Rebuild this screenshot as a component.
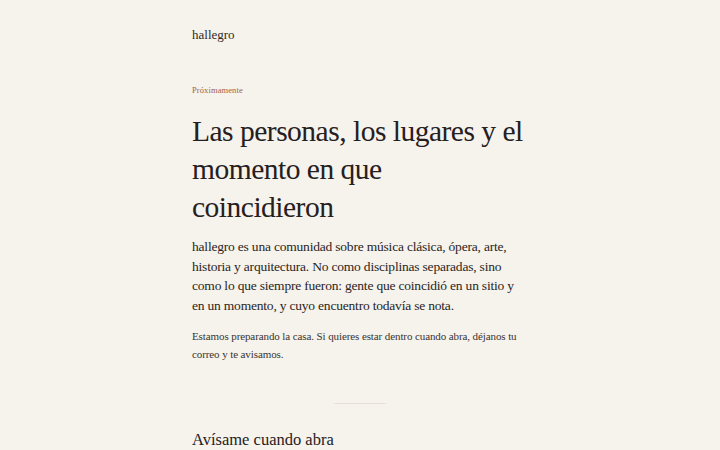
export default function App() {
    return (
        <div className="min-h-[450px] bg-[#f6f2ec] text-[#2a2522]" style={{ fontFamily: '"Liberation Serif", serif' }}>
            <div className="mx-auto w-[336px] pt-[26px]">
                <div className="text-[13px] leading-[18px] text-[#2f2a26]">hallegro</div>

                <p className="mt-[40px] text-[8.5px] leading-[12px] tracking-[0.1px] text-[#a0634a]">Próximamente</p>

                <h1 className="mt-[16px] text-[29.5px] leading-[38px] tracking-[-0.5px] text-[#25201d]">
                    Las personas, los lugares y el momento en que coincidieron
                </h1>

                <p className="mt-[11px] text-[13.5px] leading-[19.6px] tracking-[-0.2px] text-[#2a2522]">
                    hallegro es una comunidad sobre música clásica, ópera, arte, historia y arquitectura. No como disciplinas separadas, sino como lo que siempre fueron: gente que coincidió en un sitio y en un momento, y cuyo encuentro todavía se nota.
                </p>

                <p className="mt-[13px] text-[11px] leading-[17.5px] tracking-[-0.1px] text-[#3a3430]">
                    Estamos preparando la casa. Si quieres estar dentro cuando abra, déjanos tu correo y te avisamos.
                </p>

                <div className="mx-auto mt-[40px] h-px w-[52px] bg-[#e6e0d6]" />

                <h2 className="mt-[25px] text-[16.5px] leading-[22px] text-[#25201d]">Avísame cuando abra</h2>
            </div>
        </div>
    );
}
